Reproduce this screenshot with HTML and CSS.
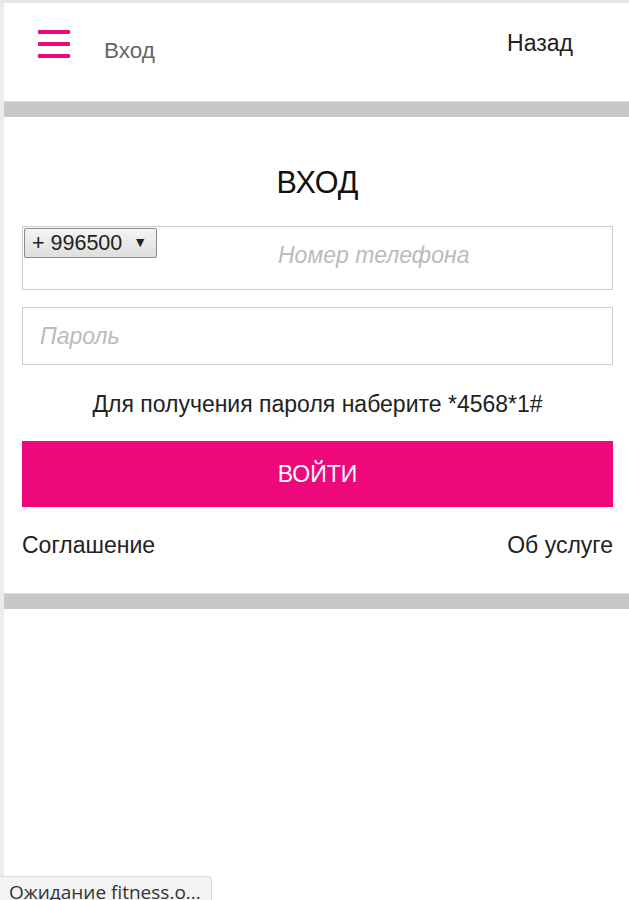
FILE: index.html
```html
<!DOCTYPE html>
<html lang="ru">
<head>
<meta charset="utf-8">
<title>Вход</title>
<link rel="stylesheet" href="styles.css">
</head>
<body>
<div class="frame">
  <header class="topbar">
    <div class="left">
      <span class="burger"><i></i><i></i><i></i></span>
      <span class="crumb">Вход</span>
    </div>
    <a class="back">Назад</a>
  </header>
  <div class="sep"></div>
  <main class="login">
    <h1 class="title">ВХОД</h1>
    <div class="field phone">
      <span class="code">+ 996500 <b>▼</b></span>
      <span class="ph ph-phone">Номер телефона</span>
    </div>
    <div class="field pass">
      <span class="ph">Пароль</span>
    </div>
    <p class="hint">Для получения пароля наберите *4568*1#</p>
    <div class="btn">ВОЙТИ</div>
    <div class="links">
      <a>Соглашение</a>
      <a>Об услуге</a>
    </div>
  </main>
  <div class="sep"></div>
</div>
<div class="status">Ожидание fitness.o...</div>
</body>
</html>
```
FILE: styles.css
```css
html, body { margin: 0; padding: 0; background: #fff; }
body {
  font-family: "Liberation Sans", Arial, sans-serif;
  color: #222;
  height: 900px;
  overflow: hidden;
}
.frame {
  border-left: 4px solid #ececec;
  border-top: 3px solid #e6e6e6;
  min-height: 897px;
  box-sizing: border-box;
}
.topbar {
  height: 98px;
  display: flex;
  justify-content: space-between;
  align-items: flex-start;
  padding: 0 56px 0 34px;
}
.left { display: flex; align-items: flex-start; }
.burger {
  display: flex;
  flex-direction: column;
  gap: 8px;
  width: 32px;
  margin-top: 27px;
}
.burger i {
  display: block;
  height: 4px;
  background: #e8097a;
  border-radius: 1px;
}
.crumb {
  margin-left: 34px;
  margin-top: 35px;
  font-size: 22.5px;
  color: #666;
}
.back {
  margin-top: 27px;
  font-size: 23px;
  color: #222;
}
.sep {
  height: 15px;
  background: #c8c8c8;
  border-top: 1px solid #ddd;
}
.login {
  padding: 0 16px 0 18px;
  height: 476px;
  box-sizing: border-box;
}
.title {
  margin: 0;
  padding-top: 48px;
  text-align: center;
  font-weight: normal;
  font-size: 30.5px;
  line-height: 34px;
  color: #111;
}
.field {
  border: 1px solid #ccc;
  box-sizing: border-box;
  position: relative;
}
.phone {
  margin-top: 27px;
  height: 64px;
}
.code {
  position: absolute;
  left: 1px;
  top: 1px;
  width: 133px;
  height: 30px;
  box-sizing: border-box;
  border: 1px solid #8a8a8a;
  border-radius: 2px;
  background: linear-gradient(#f4f4f4, #dedede);
  font-size: 21.5px;
  line-height: 27px;
  padding-left: 7px;
  color: #222;
}
.code b { font-size: 14px; font-weight: normal; vertical-align: 3px; margin-left: 5px; }
.ph {
  font-style: italic;
  color: #bbb;
  font-size: 23px;
}
.ph-phone {
  position: absolute;
  left: 255px;
  top: 15px;
}
.pass {
  margin-top: 17px;
  height: 58px;
  display: flex;
  align-items: center;
  padding-left: 17px;
}
.hint {
  margin: 26px 0 0;
  text-align: center;
  font-size: 23px;
  line-height: 26px;
}
.btn {
  margin-top: 24px;
  height: 66px;
  background: #ee087c;
  color: #fff;
  font-size: 23px;
  display: flex;
  align-items: center;
  justify-content: center;
}
.links {
  margin-top: 25px;
  display: flex;
  justify-content: space-between;
  font-size: 23px;
  color: #222;
}
.status {
  position: fixed;
  left: 0;
  bottom: -7px;
  height: 29px;
  padding: 0 10px 0 9px;
  background: #f3f3f3;
  border: 1px solid #dcdcdc;
  border-left: none;
  border-top-right-radius: 4px;
  font-family: "Open Sans", "Noto Sans", sans-serif;
  font-size: 19px;
  line-height: 31px;
  color: #333;
}
```
